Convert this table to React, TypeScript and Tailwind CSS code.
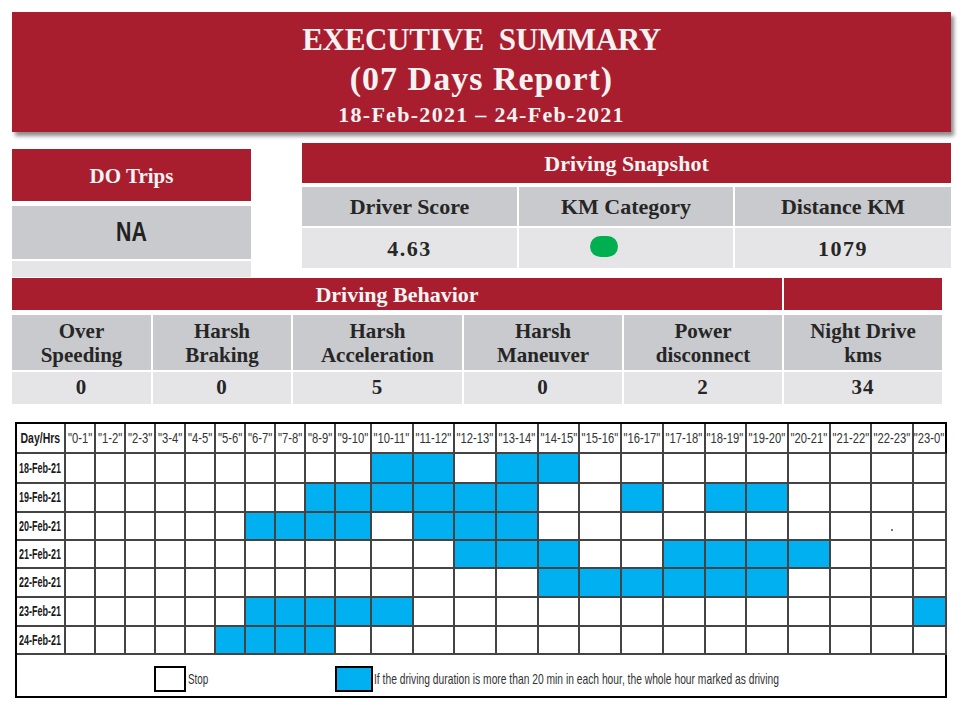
import React from "react";

const hours = Array.from({ length: 24 }, (_, i) => `${i}-${(i + 1) % 24}`);

const days: { label: string; blue: number[] }[] = [
  { label: "18-Feb-21", blue: [10, 11, 13, 14] },
  { label: "19-Feb-21", blue: [8, 9, 10, 11, 12, 13, 16, 18, 19] },
  { label: "20-Feb-21", blue: [6, 7, 8, 9, 11, 12, 13] },
  { label: "21-Feb-21", blue: [12, 13, 14, 17, 18, 19, 20] },
  { label: "22-Feb-21", blue: [14, 15, 16, 17, 18, 19] },
  { label: "23-Feb-21", blue: [6, 7, 8, 9, 10, 23] },
  { label: "24-Feb-21", blue: [5, 6, 7, 8] },
];

const behavior: { top: string; bottom: string; value: string }[] = [
  { top: "Over", bottom: "Speeding", value: "0" },
  { top: "Harsh", bottom: "Braking", value: "0" },
  { top: "Harsh", bottom: "Acceleration", value: "5" },
  { top: "Harsh", bottom: "Maneuver", value: "0" },
  { top: "Power", bottom: "disconnect", value: "2" },
  { top: "Night Drive", bottom: "kms", value: "34" },
];

export default function App() {
  return (
    <div className="w-[962px] h-[708px] bg-white overflow-hidden pt-[12px] font-['Liberation_Serif','Times_New_Roman',serif]">
      {/* Banner */}
      <div className="ml-[12px] w-[939px] h-[120px] bg-[#a91e2f] shadow-[3px_4px_4px_rgba(0,0,0,0.45)] flex flex-col items-center pt-[10px] text-[#f5f2f2] font-bold">
        <div className="text-[31px] leading-[36px] tracking-[-0.3px] whitespace-pre">EXECUTIVE  SUMMARY</div>
        <div className="text-[34px] leading-[41px] tracking-[1px]">(07 Days Report)</div>
        <div className="text-[22px] leading-[31px] tracking-[1.3px]">18-Feb-2021 – 24-Feb-2021</div>
      </div>

      {/* Row 2 */}
      <div className="flex items-start mt-[11px]">
        <div className="ml-[12px] mt-[6px] w-[239px] flex flex-col">
          <div className="h-[52px] bg-[#a91e2f] flex items-center justify-center pt-[3px] text-[21px] font-bold text-[#f7f4f4]">
            DO Trips
          </div>
          <div className="mt-[5px] h-[53px] bg-[#c9cacd] flex items-center justify-center">
            <span className="inline-block scale-x-[0.79] font-['Liberation_Sans',Arial,sans-serif] font-bold text-[27px] text-[#222]">
              NA
            </span>
          </div>
          <div className="mt-[2px] h-[16px] bg-[#e5e5e7]" />
        </div>

        <div className="ml-[51px] w-[649px] flex flex-col">
          <div className="h-[40px] bg-[#a91e2f] flex items-center justify-center text-[22px] font-bold text-[#f7f4f4]">
            Driving Snapshot
          </div>
          <div className="mt-[4px] grid grid-cols-[215px_214px_216px] gap-x-[2px] text-[22px] font-bold text-[#262626]">
            <div className="h-[39px] bg-[#c9cacd] flex items-center justify-center">Driver Score</div>
            <div className="h-[39px] bg-[#c9cacd] flex items-center justify-center">KM Category</div>
            <div className="h-[39px] bg-[#c9cacd] flex items-center justify-center">Distance KM</div>
          </div>
          <div className="mt-[2px] grid grid-cols-[215px_214px_216px] gap-x-[2px] text-[22px] font-bold text-[#262626] tracking-[1.5px]">
            <div className="h-[40px] bg-[#e5e5e7] flex items-center justify-center">4.63</div>
            <div className="h-[40px] bg-[#e5e5e7] flex items-center pl-[71px] pb-[4px]">
              <div className="w-[28px] h-[21px] rounded-full bg-[#00b050]" />
            </div>
            <div className="h-[40px] bg-[#e5e5e7] flex items-center justify-center">1079</div>
          </div>
        </div>
      </div>

      {/* Driving Behavior */}
      <div className="ml-[12px] mt-[1px] w-[930px]">
        <div className="grid grid-cols-[139px_138px_169px_158px_158px_158px] gap-x-[2px]">
          <div className="col-span-5 h-[32px] bg-[#a91e2f] flex items-center justify-center text-[22px] font-bold text-[#f7f4f4]">
            Driving Behavior
          </div>
          <div className="h-[32px] bg-[#a91e2f]" />
        </div>
        <div className="mt-[5px] grid grid-cols-[139px_138px_169px_158px_158px_158px] gap-x-[2px] text-[21px] leading-[24px] font-bold text-[#262626]">
          {behavior.map((b, i) => (
            <div key={i} className="h-[55px] bg-[#c9cacd] flex flex-col items-center justify-center text-center">
              <span>{b.top}</span>
              <span>{b.bottom}</span>
            </div>
          ))}
        </div>
        <div className="mt-[2px] grid grid-cols-[139px_138px_169px_158px_158px_158px] gap-x-[2px] text-[21px] font-bold text-[#262626] tracking-[1px]">
          {behavior.map((b, i) => (
            <div key={i} className="h-[32px] bg-[#e5e5e7] flex items-center justify-center">
              {b.value}
            </div>
          ))}
        </div>
      </div>

      {/* Hour grid */}
      <div className="ml-[15px] mt-[18px] w-fit border-l-2 border-t-2 border-black grid grid-cols-[49px_repeat(9,30px)_36px_repeat(13,41.7px)_33px] grid-rows-[30px_30px_29px_28px_28px_29px_29px_28px_43px] font-['Liberation_Sans',Arial,sans-serif] bg-white">
        <div className="flex items-center justify-center border-r-2 border-b-2 border-[#444] overflow-hidden">
          <span className="inline-block whitespace-nowrap text-[15px] font-bold scale-x-[0.7] text-[#1a1a1a]">Day/Hrs</span>
        </div>
        {hours.map((h, i) => (
          <div
            key={h}
            className={
              i === 23
                ? "flex items-center justify-center border-r-2 border-b-2 border-[#444] border-r-black overflow-hidden"
                : "flex items-center justify-center border-r-2 border-b-2 border-[#444] overflow-hidden"
            }
          >
            <span className="inline-block whitespace-nowrap text-[14px] scale-x-[0.8] text-[#333]">"{h}"</span>
          </div>
        ))}
        {days.map((d) => (
          <React.Fragment key={d.label}>
            <div className="flex items-center justify-center border-r-2 border-b-2 border-[#444] overflow-hidden">
              <span className="inline-block whitespace-nowrap text-[15px] font-bold scale-x-[0.6] text-[#1a1a1a]">{d.label}</span>
            </div>
            {hours.map((h, i) => (
              <div
                key={h}
                className={
                  d.blue.includes(i)
                    ? "border-r-2 border-b-2 border-[#444] bg-[#00b0f0]"
                    : "border-r-2 border-b-2 border-[#444] bg-white flex items-center justify-center"
                }
              >
                {d.label === "20-Feb-21" && i === 22 ? (
                  <div className="w-[2px] h-[2px] mt-[8px] bg-[#777]" />
                ) : null}
              </div>
            ))}
          </React.Fragment>
        ))}
        <div className="col-span-full border-r-2 border-b-2 border-black flex items-center pl-[137px] pt-[7px] text-[15px] text-[#333] overflow-hidden">
          <div className="w-[181px] shrink-0 flex items-center">
            <div className="w-[32px] h-[26px] border-2 border-black bg-white shrink-0" />
            <span className="ml-[2px] inline-block origin-left scale-x-[0.66] whitespace-nowrap">Stop</span>
          </div>
          <div className="shrink-0 flex items-center">
            <div className="w-[38px] h-[26px] border-2 border-black bg-[#00b0f0] shrink-0" />
            <span className="ml-[1px] inline-block origin-left scale-x-[0.685] whitespace-nowrap">
              If the driving duration is more than 20 min in each hour, the whole hour marked as driving
            </span>
          </div>
        </div>
      </div>
    </div>
  );
}
